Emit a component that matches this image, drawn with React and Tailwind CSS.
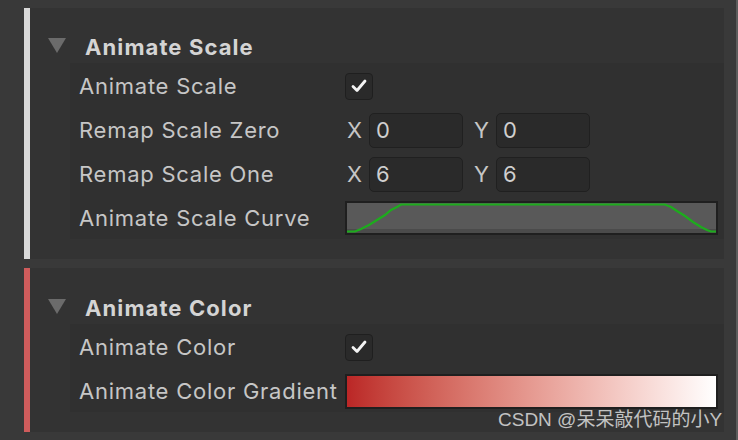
import React from "react";

const font = { fontFamily: "Inter, 'Noto Sans', sans-serif" };

function Triangle() {
  return (
    <svg width="18" height="16" viewBox="0 0 18 16" className="shrink-0">
      <polygon points="0,0 18,0 9,15" fill="#6b6b6b" />
    </svg>
  );
}

function Check() {
  return (
    <div className="w-[28px] h-[27px] rounded-[4px] bg-[#2a2a2a] border border-[#1f1f1f] flex items-center justify-center">
      <svg width="20" height="20" viewBox="0 0 20 20">
        <polyline
          points="4,10.5 8,14.5 16,5"
          fill="none"
          stroke="#f4f4f4"
          strokeWidth="2.8"
          strokeLinecap="round"
          strokeLinejoin="round"
        />
      </svg>
    </div>
  );
}

function NumField({ axis, value }) {
  return (
    <div className="flex items-center">
      <span className="w-[24px] pl-[2px] text-[22px] tracking-[0.7px] text-[#c6c6c6]">{axis}</span>
      <div className="w-[94px] h-[35px] rounded-[5px] bg-[#2a2a2a] border border-[#202020] flex items-center pl-[6px] text-[22px] text-[#cfcfcf]">
        {value}
      </div>
    </div>
  );
}

function Row({ label, children }) {
  return (
    <div className="h-[44px] flex items-center">
      <div className="w-[275px] pl-[9px] pt-[3px] text-[22px] tracking-[0.75px] text-[#c6c6c6] whitespace-nowrap">{label}</div>
      <div className="flex-1 pr-[6px] pt-[2px] flex items-center">{children}</div>
    </div>
  );
}

function Curve() {
  return (
    <div className="w-[373px] h-[34px] bg-[#1f1f1f] p-[2px]">
      <svg width="369" height="30" viewBox="0 0 369 30" className="block">
        <rect x="0" y="0" width="369" height="30" fill="#595959" />
        <rect x="0" y="26" width="369" height="4" fill="#4b4b4b" />
        <polyline
          points="0,28.5 8,28.5 14,26 22,22 30,17 38,12 44,7 50,4 54,1.5 318,1.5 324,4 330,8 338,13 346,19 354,24 360,27 364,28.5 369,28.5"
          fill="none"
          stroke="#1dac1d"
          strokeWidth="2.2"
        />
      </svg>
    </div>
  );
}

function Gradient() {
  return (
    <div className="w-[373px] h-[35px] bg-[#1f1f1f] p-[2px]">
      <div className="w-full h-full bg-linear-to-r from-[#bb2626] to-[#ffffff]" />
    </div>
  );
}

function Panel({ title, barColor, rows, headerH }) {
  return (
    <div className="flex bg-[#333333]">
      <div className={"w-[6px] shrink-0 " + barColor} />
      <div className="flex-1 flex flex-col pb-[20px]">
        <div className={"flex items-end pl-[18px] pb-[3px] " + headerH}>
          <div className="h-[28px] flex items-center">
            <Triangle />
            <span className="ml-[19px] pt-[2px] text-[22px] tracking-[1.1px] font-bold text-[#d4d4d4] leading-none">{title}</span>
          </div>
        </div>
        <div className="ml-[40px] bg-[#303030] flex flex-col">{rows}</div>
      </div>
    </div>
  );
}

export default function App() {
  return (
    <div className="w-[738px] h-[440px] bg-[#393939] flex overflow-hidden relative" style={font}>
      <div className="w-[24px] shrink-0" />
      <div className="w-[700px] pt-[8px] flex flex-col gap-[9px]">
        <Panel
          title="Animate Scale"
          barColor="bg-[#d9d9d9]"
          headerH="h-[55px]"
          rows={
            <>
              <Row label="Animate Scale">
                <Check />
              </Row>
              <Row label="Remap Scale Zero">
                <NumField axis="X" value="0" />
                <div className="w-[9px]" />
                <NumField axis="Y" value="0" />
              </Row>
              <Row label="Remap Scale One">
                <NumField axis="X" value="6" />
                <div className="w-[9px]" />
                <NumField axis="Y" value="6" />
              </Row>
              <Row label="Animate Scale Curve">
                <Curve />
              </Row>
            </>
          }
        />
        <Panel
          title="Animate Color"
          barColor="bg-[#cf5c5c]"
          headerH="h-[56px]"
          rows={
            <>
              <Row label="Animate Color">
                <Check />
              </Row>
              <Row label="Animate Color Gradient">
                <Gradient />
              </Row>
            </>
          }
        />
      </div>
      <div className="w-[12px] shrink-0" />
      <div className="w-[2px] shrink-0 bg-[#5c5c5c]" />
      <div
        className="absolute left-[498px] top-[406px] text-[19px] text-[#c2c2c2] whitespace-nowrap"
        style={{ fontFamily: "'Liberation Sans', 'Noto Sans CJK SC', sans-serif" }}
      >
        CSDN @呆呆敲代码的小Y
      </div>
    </div>
  );
}
